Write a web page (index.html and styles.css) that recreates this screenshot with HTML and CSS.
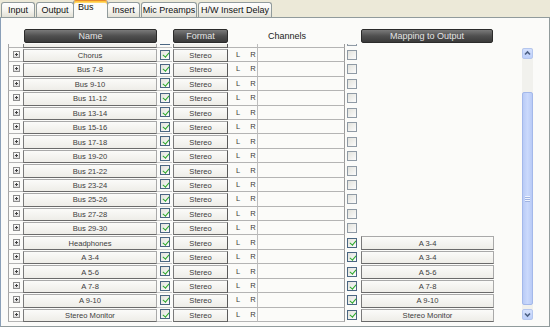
FILE: index.html
```html
<!DOCTYPE html>
<html lang="en">
<head>
    <meta charset="UTF-8">
    <title>Bus</title>
    <link rel="stylesheet" href="styles.css">
</head>
<body>
    <div class="window">
        <div class="tabs">
            <a class="tab t-input">Input</a>
            <a class="tab t-output">Output</a>
            <a class="tab t-bus active">Bus</a>
            <a class="tab t-insert">Insert</a>
            <a class="tab t-mic">Mic Preamps</a>
            <a class="tab t-hw">H/W Insert Delay</a>
        </div>
        <div class="panel">
            <div class="head">
                <div></div>
                <div class="hbtn">Name</div>
                <div></div>
                <div class="hbtn fmt-h">Format</div>
                <div class="channels">Channels</div>
                <div></div>
                <div class="hbtn map-h">Mapping to Output</div>
                <div></div>
            </div>
            <div class="body">
                <div class="list">
                    <div class="rows">
                        <!-- row scrolled mostly out of view -->
                        <div class="row"><div class="exp"><i></i></div><div class="name"></div><div class="chk"><span class="cb on"></span></div><div class="fmt"></div><div class="lr"></div><div class="blank"></div><div class="chk2"><span class="cb"></span></div><div class="map"></div><div></div></div>
                        <div class="row"><div class="exp"><i></i></div><div class="name">Chorus</div><div class="chk"><span class="cb on"></span></div><div class="fmt">Stereo</div><div class="lr"><span>L</span><span>R</span></div><div class="blank"></div><div class="chk2"><span class="cb"></span></div><div class="map"></div><div></div></div>
                        <div class="row"><div class="exp"><i></i></div><div class="name">Bus 7-8</div><div class="chk"><span class="cb on"></span></div><div class="fmt">Stereo</div><div class="lr"><span>L</span><span>R</span></div><div class="blank"></div><div class="chk2"><span class="cb"></span></div><div class="map"></div><div></div></div>
                        <div class="row"><div class="exp"><i></i></div><div class="name">Bus 9-10</div><div class="chk"><span class="cb on"></span></div><div class="fmt">Stereo</div><div class="lr"><span>L</span><span>R</span></div><div class="blank"></div><div class="chk2"><span class="cb"></span></div><div class="map"></div><div></div></div>
                        <div class="row"><div class="exp"><i></i></div><div class="name">Bus 11-12</div><div class="chk"><span class="cb on"></span></div><div class="fmt">Stereo</div><div class="lr"><span>L</span><span>R</span></div><div class="blank"></div><div class="chk2"><span class="cb"></span></div><div class="map"></div><div></div></div>
                        <div class="row"><div class="exp"><i></i></div><div class="name">Bus 13-14</div><div class="chk"><span class="cb on"></span></div><div class="fmt">Stereo</div><div class="lr"><span>L</span><span>R</span></div><div class="blank"></div><div class="chk2"><span class="cb"></span></div><div class="map"></div><div></div></div>
                        <div class="row"><div class="exp"><i></i></div><div class="name">Bus 15-16</div><div class="chk"><span class="cb on"></span></div><div class="fmt">Stereo</div><div class="lr"><span>L</span><span>R</span></div><div class="blank"></div><div class="chk2"><span class="cb"></span></div><div class="map"></div><div></div></div>
                        <div class="row"><div class="exp"><i></i></div><div class="name">Bus 17-18</div><div class="chk"><span class="cb on"></span></div><div class="fmt">Stereo</div><div class="lr"><span>L</span><span>R</span></div><div class="blank"></div><div class="chk2"><span class="cb"></span></div><div class="map"></div><div></div></div>
                        <div class="row"><div class="exp"><i></i></div><div class="name">Bus 19-20</div><div class="chk"><span class="cb on"></span></div><div class="fmt">Stereo</div><div class="lr"><span>L</span><span>R</span></div><div class="blank"></div><div class="chk2"><span class="cb"></span></div><div class="map"></div><div></div></div>
                        <div class="row"><div class="exp"><i></i></div><div class="name">Bus 21-22</div><div class="chk"><span class="cb on"></span></div><div class="fmt">Stereo</div><div class="lr"><span>L</span><span>R</span></div><div class="blank"></div><div class="chk2"><span class="cb"></span></div><div class="map"></div><div></div></div>
                        <div class="row"><div class="exp"><i></i></div><div class="name">Bus 23-24</div><div class="chk"><span class="cb on"></span></div><div class="fmt">Stereo</div><div class="lr"><span>L</span><span>R</span></div><div class="blank"></div><div class="chk2"><span class="cb"></span></div><div class="map"></div><div></div></div>
                        <div class="row"><div class="exp"><i></i></div><div class="name">Bus 25-26</div><div class="chk"><span class="cb on"></span></div><div class="fmt">Stereo</div><div class="lr"><span>L</span><span>R</span></div><div class="blank"></div><div class="chk2"><span class="cb"></span></div><div class="map"></div><div></div></div>
                        <div class="row"><div class="exp"><i></i></div><div class="name">Bus 27-28</div><div class="chk"><span class="cb on"></span></div><div class="fmt">Stereo</div><div class="lr"><span>L</span><span>R</span></div><div class="blank"></div><div class="chk2"><span class="cb"></span></div><div class="map"></div><div></div></div>
                        <div class="row"><div class="exp"><i></i></div><div class="name">Bus 29-30</div><div class="chk"><span class="cb on"></span></div><div class="fmt">Stereo</div><div class="lr"><span>L</span><span>R</span></div><div class="blank"></div><div class="chk2"><span class="cb"></span></div><div class="map"></div><div></div></div>
                        <div class="row"><div class="exp"><i></i></div><div class="name">Headphones</div><div class="chk"><span class="cb on"></span></div><div class="fmt">Stereo</div><div class="lr"><span>L</span><span>R</span></div><div class="blank"></div><div class="chk2"><span class="cb on"></span></div><div class="map"><span class="mcell">A 3-4</span></div><div></div></div>
                        <div class="row"><div class="exp"><i></i></div><div class="name">A 3-4</div><div class="chk"><span class="cb on"></span></div><div class="fmt">Stereo</div><div class="lr"><span>L</span><span>R</span></div><div class="blank"></div><div class="chk2"><span class="cb on"></span></div><div class="map"><span class="mcell">A 3-4</span></div><div></div></div>
                        <div class="row"><div class="exp"><i></i></div><div class="name">A 5-6</div><div class="chk"><span class="cb on"></span></div><div class="fmt">Stereo</div><div class="lr"><span>L</span><span>R</span></div><div class="blank"></div><div class="chk2"><span class="cb on"></span></div><div class="map"><span class="mcell">A 5-6</span></div><div></div></div>
                        <div class="row"><div class="exp"><i></i></div><div class="name">A 7-8</div><div class="chk"><span class="cb on"></span></div><div class="fmt">Stereo</div><div class="lr"><span>L</span><span>R</span></div><div class="blank"></div><div class="chk2"><span class="cb on"></span></div><div class="map"><span class="mcell">A 7-8</span></div><div></div></div>
                        <div class="row"><div class="exp"><i></i></div><div class="name">A 9-10</div><div class="chk"><span class="cb on"></span></div><div class="fmt">Stereo</div><div class="lr"><span>L</span><span>R</span></div><div class="blank"></div><div class="chk2"><span class="cb on"></span></div><div class="map"><span class="mcell">A 9-10</span></div><div></div></div>
                        <div class="row"><div class="exp"><i></i></div><div class="name">Stereo Monitor</div><div class="chk"><span class="cb on"></span></div><div class="fmt">Stereo</div><div class="lr"><span>L</span><span>R</span></div><div class="blank"></div><div class="chk2"><span class="cb on"></span></div><div class="map"><span class="mcell">Stereo Monitor</span></div><div></div></div>
                    </div>
                </div>
                <div class="scroll">
                    <div class="sbtn up"><svg width="9" height="9" viewBox="0 0 9 9"><polyline points="2,5.5 4.5,3 7,5.5" fill="none" stroke="#4d6185" stroke-width="1.6"/></svg></div>
                    <div class="track">
                        <div class="thumb"><span class="grip"></span></div>
                    </div>
                    <div class="sbtn down"><svg width="9" height="9" viewBox="0 0 9 9"><polyline points="2,3.5 4.5,6 7,3.5" fill="none" stroke="#4d6185" stroke-width="1.6"/></svg></div>
                </div>
            </div>
        </div>
    </div>
</body>
</html>
```
FILE: styles.css
```css
/*
reset
*/
* {
    box-sizing: border-box;
}
body {
    margin: 0;
    background: #ece9d8;
    font-family: "Liberation Sans", Arial, sans-serif;
    color: #222;
}
.window {
    width: 550px;
    height: 327px;
    overflow: hidden;
}

/*
tabs
*/
.tabs {
    display: flex;
    align-items: flex-end;
    height: 17px;
    padding-left: 1px;
    position: relative;
    z-index: 1;
}
.tab {
    height: 15px;
    margin-right: 1px;
    border: 1px solid #919b9c;
    border-bottom: 0;
    border-radius: 3px 3px 0 0;
    background: linear-gradient(#fefefe, #f4f3ee 55%, #e3e1d6);
    font-size: 9px;
    line-height: 14px;
    text-align: center;
    color: #111;
}
.t-input { width: 34px; }
.t-output { width: 38px; }
.t-insert { width: 33px; }
.t-mic { width: 56px; }
.t-hw { width: 74px; }
.tab.active {
    width: 35px;
    height: 18px;
    margin: 0 -1px -1px -2px;
    border-top: 1px solid #e68b2c;
    box-shadow: inset 0 1px 0 #ffc83c, inset 0 2px 0 #ffd76a;
    background: #fbfbf9;
    padding-left: 4px;
    line-height: 12px;
    text-align: left;
}

/*
panel
*/
.panel {
    height: 310px;
    border: 1px solid #919b9c;
    border-left-color: #8a9fb8;
    background: #fbfbf9;
    padding: 11px 0 0 7px;
}
.head,
.row {
    display: grid;
    grid-template-columns: 15px 134px 15px 56px 29px 88px 14px 135px 26px;
}
.head {
    grid-template-columns: 15px 134px 15px 56px 117px 14px 135px 26px;
    height: 14px;
}
.hbtn {
    height: 14px;
    border: 1px solid #2b2b2b;
    border-radius: 2px;
    background: linear-gradient(#7a7a7a, #4f4f4f 50%, #3a3a3a);
    color: #e4e4e4;
    font-size: 9px;
    line-height: 12px;
    text-align: center;
    margin-left: 1px;
}
.map-h {
    margin: 0 1px 0 2px;
}
.channels {
    font-size: 9px;
    line-height: 14px;
    text-align: center;
    color: #222;
    padding-left: 1px;
}

.body {
    display: flex;
    margin-top: 1px;
}
.list {
    width: 512px;
    height: 279px;
    overflow: hidden;
}
.rows {
    margin-top: -10.65px;
}
.row {
    height: 14.45px;
    font-size: 7.6px;
    color: #3c3c3c;
}
.row > div {
    display: flex;
    align-items: center;
}
.exp {
    border-left: 1px solid #a4a4a4;
    border-bottom: 1px solid #b4b4b4;
    padding-left: 4px;
}
.exp i {
    position: relative;
    width: 7px;
    height: 7px;
    border: 1px solid #8c8c8c;
    background: linear-gradient(#fafafa, #dcdcdc);
}
.exp i::before,
.exp i::after {
    content: "";
    position: absolute;
    background: #444;
}
.exp i::before {
    left: 1px;
    top: 2px;
    width: 3px;
    height: 1px;
}
.exp i::after {
    left: 2px;
    top: 1px;
    width: 1px;
    height: 3px;
}
.row .name,
.row .fmt,
.mcell {
    justify-content: center;
    margin-top: 1px;
    border: 1px solid #a9a9a9;
    border-bottom-color: #6a6a6a;
    border-left-color: #7a7a7a;
    background: linear-gradient(#fbfbf9, #eeede8);
}
.row .fmt {
    margin-left: 1px;
    border-right-color: #5a5a5a;
}
.chk {
    border-bottom: 1px solid #c4c4c4;
    padding-left: 3px;
}
.chk2 {
    padding-left: 2px;
}
.cb {
    position: relative;
    width: 10px;
    height: 10px;
    border: 1px solid #8f9aa5;
    background: linear-gradient(135deg, #e2e2dc, #fcfcfc);
}
.cb.on {
    border-color: #4a6682;
}
.cb.on::after {
    content: "";
    position: absolute;
    left: 3px;
    top: 0.5px;
    width: 2.5px;
    height: 5px;
    border: solid #2aa82a;
    border-width: 0 1.5px 1.5px 0;
    transform: rotate(40deg);
}
.lr {
    border-bottom: 1px solid #b4b4b4;
    padding-left: 8px;
    gap: 10px;
}
.blank {
    border-left: 1px solid #bdbdbd;
    border-right: 1px solid #9c9c9c;
    border-bottom: 1px solid #b4b4b4;
}
.map {
    padding-left: 2px;
}
.mcell {
    display: flex;
    align-items: center;
    width: 133px;
    height: 13.45px;
}

/*
scrollbar
*/
.scroll {
    display: flex;
    flex-direction: column;
    width: 11px;
    height: 272px;
    margin: 4px 0 0 2px;
    background: #f1f1ed;
}
.sbtn {
    display: flex;
    align-items: center;
    justify-content: center;
    height: 11px;
    border: 1px solid #b4c6ee;
    border-radius: 2px;
    background: linear-gradient(#d5e1fd, #bccffa);
}
.track {
    flex: 1;
    padding-top: 33px;
}
.thumb {
    display: flex;
    align-items: center;
    justify-content: center;
    height: 213px;
    border: 1px solid #a3b8ea;
    border-radius: 2px;
    background: linear-gradient(90deg, #b9cbf6, #cad9fc 50%, #b9cbf6);
}
.grip {
    width: 5px;
    height: 6px;
    background: repeating-linear-gradient(#eef3fe 0 1px, #9fb3e2 1px 2px);
}
```
